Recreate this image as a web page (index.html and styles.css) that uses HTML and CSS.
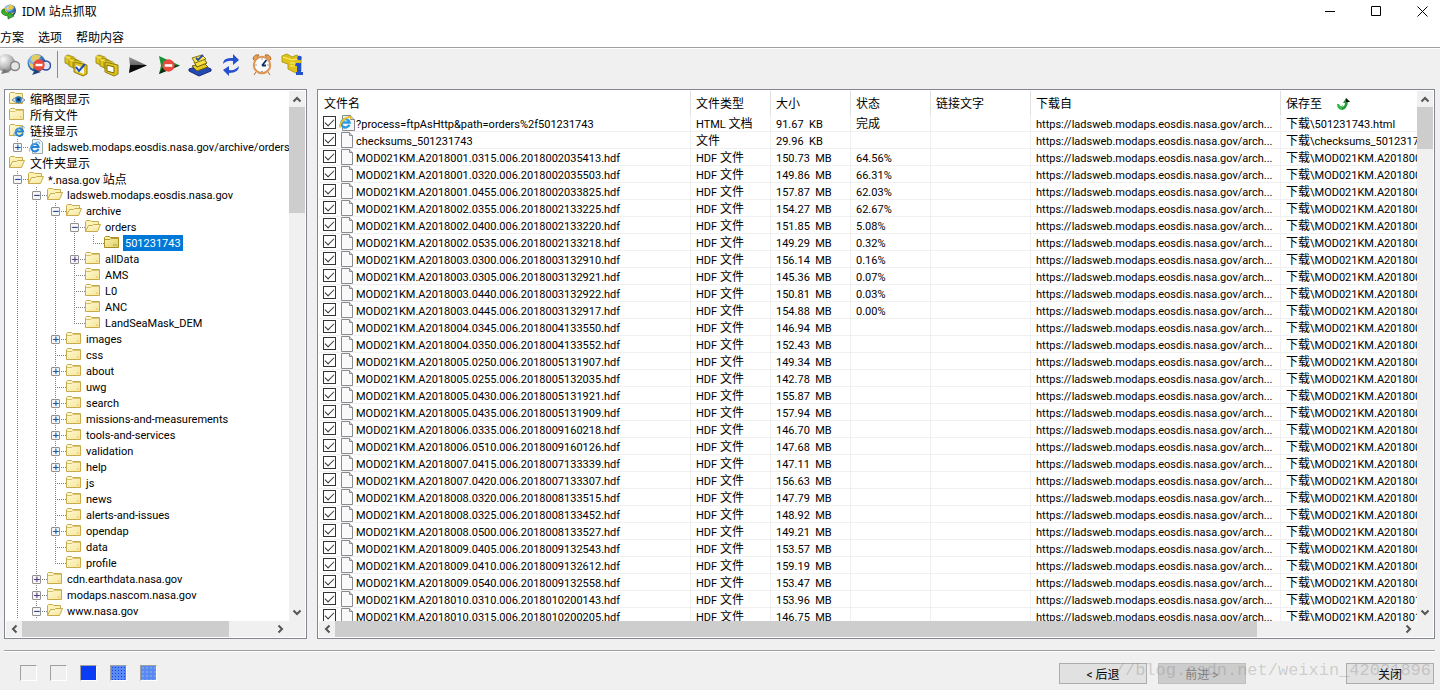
FILE: index.html
```html
<!DOCTYPE html>
<html lang="zh-CN">
<head>
<meta charset="utf-8">
<title>IDM 站点抓取</title>
<link rel="stylesheet" href="styles.css">
</head>
<body>
<svg class="defs" aria-hidden="true">
  <defs>
    <linearGradient id="gold" x1="0" y1="0" x2="1" y2="1"><stop offset="0" stop-color="#fffbd8"/><stop offset="1" stop-color="#f6e596"/></linearGradient>
    <linearGradient id="goldsel" x1="0" y1="0" x2="1" y2="1"><stop offset="0" stop-color="#fdf6b8"/><stop offset="1" stop-color="#e0cd62"/></linearGradient>
    <linearGradient id="dark" x1="0" y1="0" x2="0" y2="1"><stop offset="0" stop-color="#999"/><stop offset=".5" stop-color="#666"/><stop offset=".5" stop-color="#111"/><stop offset="1" stop-color="#000"/></linearGradient>
    <radialGradient id="earth" cx=".35" cy=".3" r=".75"><stop offset="0" stop-color="#d4ebff"/><stop offset=".5" stop-color="#4186cf"/><stop offset="1" stop-color="#123a80"/></radialGradient>
    <radialGradient id="moon" cx=".35" cy=".3" r=".75"><stop offset="0" stop-color="#fafafa"/><stop offset=".6" stop-color="#bbb"/><stop offset="1" stop-color="#777"/></radialGradient>
    <symbol id="folder" viewBox="0 0 16 16"><path d="M.5 12.500v-10l1-1h4l1 1h8v10z" fill="url(#gold)" stroke="#c9ab4c"/><path d="M1 4.500h5l1-1h7" fill="none" stroke="#d9c26e"/><path d="M11 9h2v2h-2z" fill="#fbcf8c"/></symbol>
    <symbol id="folder-sel" viewBox="0 0 16 16"><path d="M.5 12.500v-10l1-1h4l1 1h8v10z" fill="url(#goldsel)" stroke="#aa8e20"/><path d="M1 4.500h5l1-1h7" fill="none" stroke="#b79c34"/><path d="M9 9h4v2H9z" fill="#bfc36a"/></symbol>
    <symbol id="open" viewBox="0 0 16 16"><path d="M.5 12.500V2.500l1-1h4l1 1h7v4" fill="#fdf2b4" stroke="#c9ab4c"/><path d="M.5 12.500 3.500 6.500h4l1-1h7l-3 7z" fill="url(#gold)" stroke="#c9ab4c"/></symbol>
    <symbol id="e" viewBox="0 0 16 16"><path d="M13.300 10.500A5 5 0 1 1 13.500 8H5" fill="none" stroke="#2383d8" stroke-width="2.600"/><path d="M2 14C-1 13 4 4 12 1.500c3-1 3.500 1 2.500 2.500" fill="none" stroke="#58a9e8" stroke-width="1.300"/></symbol>
    <symbol id="e-gold" viewBox="0 0 16 16"><path d="M3.500.5h8l4 4v11h-12z" fill="#f7f7f7" stroke="#888"/><path d="M11.500.5v4h4" fill="#ddd" stroke="#888"/><path d="M10.300 9.800A4.200 4.200 0 1 1 10.500 7.500H4" fill="none" stroke="#299be6" stroke-width="2.400"/><path d="M1.500 12.500C-1 11 4 3 10 2c2-.3 2 .8 1.500 1.800" fill="none" stroke="#e9c62c" stroke-width="1.800"/></symbol>
    <symbol id="folder-e" viewBox="0 0 16 16"><path d="M.5 12.500v-10l1-1h4l1 1h7v10z" fill="url(#gold)" stroke="#c9ab4c"/><use href="#e" x="4" y="2" width="12" height="13"/></symbol>
    <symbol id="page-e" viewBox="0 0 16 16"><path d="M4.500.5h7l3 3v11h-10z" fill="#f2f5f8" stroke="#9aa"/><use href="#e" y="2" width="13" height="12"/></symbol>
    <symbol id="eye" viewBox="0 0 16 16"><path d="M.5 12.500v-10l1-1h4l1 1h7v10z" fill="url(#gold)" stroke="#c9ab4c"/><path d="M3 9q6-6 13 0-6 6-13 0z" fill="#dbe8f1" stroke="#718da5"/><circle cx="9.500" cy="8.500" r="3.200" fill="#1e6fb4"/><circle cx="9.500" cy="8.500" r="1.300" fill="#071d3c"/></symbol>
    <symbol id="doc" viewBox="0 0 16 16"><path d="M2.500.5h8l3 3v12h-11z" fill="#f9f9f9" stroke="#888b90"/><path d="M10.500.5v3h3" fill="#ddd" stroke="#888b90"/></symbol>
    <symbol id="chev" viewBox="0 0 16 16"><path d="M4.500 10.500 8 7l3.500 3.500" fill="none" stroke="#555" stroke-width="2"/></symbol>
    <symbol id="idm" viewBox="0 0 16 16"><circle cx="9" cy="6.500" r="6" fill="url(#earth)"/><path d="M8 1q4-1 5 3l-3 2-3-1z" fill="#e7c745"/><path d="M2.500 4Q-1 8 2 10q3 3 9 .5l3-2.500q-5 2-8 0Q4 6 6 4z" fill="#e9c62c"/><path d="M1 6q-2 5 6 6v3l6-3-5-4v1.500Q3 9 3.500 5z" fill="#35b52e" stroke="#176c17" stroke-width=".7"/></symbol>
    <symbol id="stop" viewBox="0 0 12 12"><circle cx="6" cy="6" r="5.700" fill="#e94a3c"/><path d="M2.500 4.800h7v2.400h-7z" fill="#fff"/></symbol>
    <symbol id="cam" viewBox="0 0 12 12"><path d="M1 2.500 4 1l7 2.500v7L8 12 1 9z" fill="#e0c61c" stroke="#8f7d14" stroke-width=".8"/><path d="M1 2.500 8 5l3-1.500M8 5v6.500" fill="none" stroke="#fff06a" stroke-width=".9"/></symbol>
    <symbol id="cams" viewBox="0 0 24 24"><use href="#cam" x="0" y="1" width="12" height="12"/><use href="#cam" x="4" y="4" width="12" height="12"/><use href="#cam" x="8" y="6" width="12" height="12"/><path d="m10 9 13 3v9l-4 2-9-4z" fill="#e0c61c" stroke="#8f7d14"/></symbol>
  </defs>
</svg>
<div class="app">
  <header class="titlebar">
    <svg class="i16"><use href="#idm"/></svg>
    <h1>IDM 站点抓取</h1>
    <div class="winctl">
      <button type="button" aria-label="最小化"><svg viewBox="0 0 11 11"><path d="M0 5.500h10"/></svg></button>
      <button type="button" aria-label="最大化"><svg viewBox="0 0 11 11"><path d="M.5.5h9v9h-9z"/></svg></button>
      <button type="button" aria-label="关闭窗口"><svg viewBox="0 0 11 11"><path d="m.5.5 10 10m0-10-10 10"/></svg></button>
    </div>
  </header>
  <nav class="menu"><button type="button">方案</button><button type="button">选项</button><button type="button">帮助内容</button></nav>
  <div class="toolbar" role="toolbar">
    <button type="button" class="first" aria-label="开始"><svg viewBox="4 0 20 24"><circle cx="10" cy="10" r="9" fill="url(#moon)"/><path d="m5 21 3-5 6 3z" fill="#777"/><circle cx="19" cy="13" r="4.500" fill="#e5e5e5" stroke="#858585" stroke-width="1.500"/></svg></button>
    <button type="button" aria-label="停止抓取"><svg viewBox="0 0 24 24"><circle cx="9.500" cy="10" r="9" fill="url(#earth)"/><path d="M5 3q4-3 9 0l-3 4-6 1zM2 9l5 3-1 4q-4-2-4-7z" fill="#e3cd62"/><path d="m5 22 3-5 6 2z" fill="#17407f"/><circle cx="19" cy="12.500" r="4.500" fill="#dfe4f2" stroke="#2b4ba0" stroke-width="1.500"/><use href="#stop" x="6" y="6" width="12" height="12"/></svg></button>
    <span class="sep"></span>
    <button type="button" aria-label="全部选中"><svg viewBox="0 0 24 24"><use href="#cams"/><path d="m12 12 8 3v6l-8-3z" fill="#eef3ff"/><path d="m12 14 3 4 6-7" fill="none" stroke="#274bb0" stroke-width="2"/></svg></button>
    <button type="button" aria-label="取消选中"><svg viewBox="0 0 24 24"><use href="#cams"/><path d="m12 12 7 2v6l-7-2z" fill="#fff" stroke="#77670c"/></svg></button>
    <button type="button" aria-label="下载"><svg viewBox="0 0 24 24"><path d="m3 4 18 8.500L3 20l1-7.500z" fill="url(#dark)"/></svg></button>
    <button type="button" aria-label="停止下载"><svg viewBox="0 0 24 24"><path d="m2 3 21 9.500L2 21l2-8.500z" fill="#159238"/><path d="m14 12.500h9L2 21l3-6z" fill="#102915"/><use href="#stop" x="5" y="6" width="13" height="13"/></svg></button>
    <button type="button" aria-label="添加到队列"><svg viewBox="0 0 24 24"><path d="m1 16 13-4 9 4v2l-12 5-10-5z" fill="#244ab4" stroke="#132c7c"/><path d="m4 13 12-3 4 4-11 4z" fill="#e6c920" stroke="#6d5c0c"/><path d="m6 9 10-3 3 4-10 4z" fill="#f5df43" stroke="#6d5c0c"/><path d="m4 5 10-3 4 4-11 4z" fill="#f8e955" stroke="#82710e"/><path d="m8 5 2 2 5-5" fill="none" stroke="#274bb0" stroke-width="1.800"/></svg></button>
    <button type="button" aria-label="刷新"><svg viewBox="0 0 24 24"><path d="M4 11q0-7 10-6V1l6 6-6 5V8q-6-1-10 3zM20 13q0 7-10 7v3l-6-6 6-4v4q6 1 10-4z" fill="#2550d0"/></svg></button>
    <button type="button" aria-label="计划任务"><svg viewBox="0 0 24 24"><path d="M3 6q1-5 6-4L5 8zM21 6q-1-5-6-4l4 6zM6 19l-2 3M18 19l2 3" fill="#e8a05a" stroke="#b46b2c"/><circle cx="12" cy="12" r="8.200" fill="#fbfdff" stroke="#dc9550" stroke-width="2"/><path d="M12 12.500 16.500 7M12 12.500h4" stroke="#153065" stroke-width="1.800"/><path d="M12 5.500v1M12 18v1M5.500 12h1M17.500 12h1" stroke="#444"/></svg></button>
    <button type="button" aria-label="属性"><svg viewBox="0 0 24 24"><path d="m1 3 5-2 5 3 5-2 4 4v12l-5 2-8-4v-5L1 9z" fill="#dfc31c" stroke="#b79e18"/><path d="M2 4l9 3 5-1M9 10h5M9 13h5" stroke="#fff06a" fill="none"/><circle cx="18.500" cy="5" r="2.300" fill="#2452cf"/><path d="M15 10h5v9h2v3h-7v-3h1v-6h-2z" fill="#2452cf"/></svg></button>
  </div>

  <main class="panes">
    <section class="pane tree-pane" aria-label="站点树">
      <div class="view">
        <ul class="tree">
          <li><svg class="i16"><use href="#eye"/></svg><span class="zh">缩略图显示</span></li>
          <li><svg class="i16"><use href="#folder"/></svg><span class="zh">所有文件</span></li>
          <li><svg class="i16"><use href="#folder-e"/></svg><span class="zh">链接显示</span></li>
          <li><i class="l"><button type="button" aria-label="展开">+</button></i><svg class="i16"><use href="#page-e"/></svg><span>ladsweb.modaps.eosdis.nasa.gov/archive/orders/</span></li>
          <li><svg class="i16"><use href="#open"/></svg><span class="zh">文件夹显示</span></li>
          <li><i class="t"><button type="button" aria-label="折叠">−</button></i><svg class="i16"><use href="#open"/></svg><span>*.nasa.gov <span class="zh">站点</span></span></li>
          <li><i class="v"></i><i class="t"><button type="button" aria-label="折叠">−</button></i><svg class="i16"><use href="#open"/></svg><span>ladsweb.modaps.eosdis.nasa.gov</span></li>
          <li><i class="v"></i><i class="v"></i><i class="t"><button type="button" aria-label="折叠">−</button></i><svg class="i16"><use href="#open"/></svg><span>archive</span></li>
          <li><i class="v"></i><i class="v"></i><i class="v"></i><i class="t"><button type="button" aria-label="折叠">−</button></i><svg class="i16"><use href="#open"/></svg><span>orders</span></li>
          <li><i class="v"></i><i class="v"></i><i class="v"></i><i class="v"></i><i class="l"></i><svg class="i16"><use href="#folder-sel"/></svg><span class="selected">501231743</span></li>
          <li><i class="v"></i><i class="v"></i><i class="v"></i><i class="t"><button type="button" aria-label="展开">+</button></i><svg class="i16"><use href="#folder"/></svg><span>allData</span></li>
          <li><i class="v"></i><i class="v"></i><i class="v"></i><i class="t"></i><svg class="i16"><use href="#folder"/></svg><span>AMS</span></li>
          <li><i class="v"></i><i class="v"></i><i class="v"></i><i class="t"></i><svg class="i16"><use href="#folder"/></svg><span>L0</span></li>
          <li><i class="v"></i><i class="v"></i><i class="v"></i><i class="t"></i><svg class="i16"><use href="#folder"/></svg><span>ANC</span></li>
          <li><i class="v"></i><i class="v"></i><i class="v"></i><i class="l"></i><svg class="i16"><use href="#folder"/></svg><span>LandSeaMask_DEM</span></li>
          <li><i class="v"></i><i class="v"></i><i class="t"><button type="button" aria-label="展开">+</button></i><svg class="i16"><use href="#folder"/></svg><span>images</span></li>
          <li><i class="v"></i><i class="v"></i><i class="t"></i><svg class="i16"><use href="#folder"/></svg><span>css</span></li>
          <li><i class="v"></i><i class="v"></i><i class="t"><button type="button" aria-label="展开">+</button></i><svg class="i16"><use href="#folder"/></svg><span>about</span></li>
          <li><i class="v"></i><i class="v"></i><i class="t"></i><svg class="i16"><use href="#folder"/></svg><span>uwg</span></li>
          <li><i class="v"></i><i class="v"></i><i class="t"><button type="button" aria-label="展开">+</button></i><svg class="i16"><use href="#folder"/></svg><span>search</span></li>
          <li><i class="v"></i><i class="v"></i><i class="t"><button type="button" aria-label="展开">+</button></i><svg class="i16"><use href="#folder"/></svg><span>missions-and-measurements</span></li>
          <li><i class="v"></i><i class="v"></i><i class="t"><button type="button" aria-label="展开">+</button></i><svg class="i16"><use href="#folder"/></svg><span>tools-and-services</span></li>
          <li><i class="v"></i><i class="v"></i><i class="t"><button type="button" aria-label="展开">+</button></i><svg class="i16"><use href="#folder"/></svg><span>validation</span></li>
          <li><i class="v"></i><i class="v"></i><i class="t"><button type="button" aria-label="展开">+</button></i><svg class="i16"><use href="#folder"/></svg><span>help</span></li>
          <li><i class="v"></i><i class="v"></i><i class="t"></i><svg class="i16"><use href="#folder"/></svg><span>js</span></li>
          <li><i class="v"></i><i class="v"></i><i class="t"></i><svg class="i16"><use href="#folder"/></svg><span>news</span></li>
          <li><i class="v"></i><i class="v"></i><i class="t"></i><svg class="i16"><use href="#folder"/></svg><span>alerts-and-issues</span></li>
          <li><i class="v"></i><i class="v"></i><i class="t"><button type="button" aria-label="展开">+</button></i><svg class="i16"><use href="#folder"/></svg><span>opendap</span></li>
          <li><i class="v"></i><i class="v"></i><i class="t"></i><svg class="i16"><use href="#folder"/></svg><span>data</span></li>
          <li><i class="v"></i><i class="v"></i><i class="l"></i><svg class="i16"><use href="#folder"/></svg><span>profile</span></li>
          <li><i class="v"></i><i class="t"><button type="button" aria-label="展开">+</button></i><svg class="i16"><use href="#folder"/></svg><span>cdn.earthdata.nasa.gov</span></li>
          <li><i class="v"></i><i class="t"><button type="button" aria-label="展开">+</button></i><svg class="i16"><use href="#folder"/></svg><span>modaps.nascom.nasa.gov</span></li>
          <li><i class="v"></i><i class="t"><button type="button" aria-label="折叠">−</button></i><svg class="i16"><use href="#open"/></svg><span>www.nasa.gov</span></li>
        </ul>
      </div>
      <div class="vbar"><svg class="i16"><use href="#chev"/></svg><div class="thumb"></div><svg class="i16 down"><use href="#chev"/></svg></div>
      <div class="hbar"><svg class="i16 left"><use href="#chev"/></svg><div class="thumb"></div><svg class="i16 right"><use href="#chev"/></svg></div>
    </section>

    <section class="pane list-pane" aria-label="文件列表">
      <div class="view">
        <table>
          <colgroup><col class="c-name"><col class="c-s"><col class="c-s"><col class="c-s"><col class="c-text"><col class="c-from"><col></colgroup>
          <thead><tr><th>文件名</th><th>文件类型</th><th>大小</th><th>状态</th><th>链接文字</th><th>下载自</th><th><div class="sorted">保存至<svg viewBox="0 0 14 14"><path d="M1 7h2q1 3 4 2l-1-2 1 6q-6 0-6-6z" fill="#35b84b"/><path d="M6 13q5-1 6-8h2l-4-4-3 5h2q0 3-3 4z" fill="#1f9c38"/><path d="m10 1 4 4h-4z" fill="#111"/></svg></div></th></tr></thead>
          <tbody>
          <tr><td><label><input type="checkbox" checked><svg class="ico"><use href="#e-gold"/></svg>?process=ftpAsHttp&amp;path=orders%2f501231743</label></td><td>HTML <span class="zh">文档</span></td><td>91.67&nbsp; KB</td><td><span class="zh">完成</span></td><td></td><td>https://ladsweb.modaps.eosdis.nasa.gov/arch...</td><td><span class="zh">下载</span>\501231743.html</td></tr>
          <tr><td><label><input type="checkbox" checked><svg class="ico"><use href="#doc"/></svg>checksums_501231743</label></td><td><span class="zh">文件</span></td><td>29.96&nbsp; KB</td><td></td><td></td><td>https://ladsweb.modaps.eosdis.nasa.gov/arch...</td><td><span class="zh">下载</span>\checksums_501231743</td></tr>
          <tr><td><label><input type="checkbox" checked><svg class="ico"><use href="#doc"/></svg>MOD021KM.A2018001.0315.006.2018002035413.hdf</label></td><td>HDF <span class="zh">文件</span></td><td>150.73&nbsp; MB</td><td>64.56%</td><td></td><td>https://ladsweb.modaps.eosdis.nasa.gov/arch...</td><td><span class="zh">下载</span>\MOD021KM.A2018001</td></tr>
          <tr><td><label><input type="checkbox" checked><svg class="ico"><use href="#doc"/></svg>MOD021KM.A2018001.0320.006.2018002035503.hdf</label></td><td>HDF <span class="zh">文件</span></td><td>149.86&nbsp; MB</td><td>66.31%</td><td></td><td>https://ladsweb.modaps.eosdis.nasa.gov/arch...</td><td><span class="zh">下载</span>\MOD021KM.A2018001</td></tr>
          <tr><td><label><input type="checkbox" checked><svg class="ico"><use href="#doc"/></svg>MOD021KM.A2018001.0455.006.2018002033825.hdf</label></td><td>HDF <span class="zh">文件</span></td><td>157.87&nbsp; MB</td><td>62.03%</td><td></td><td>https://ladsweb.modaps.eosdis.nasa.gov/arch...</td><td><span class="zh">下载</span>\MOD021KM.A2018001</td></tr>
          <tr><td><label><input type="checkbox" checked><svg class="ico"><use href="#doc"/></svg>MOD021KM.A2018002.0355.006.2018002133225.hdf</label></td><td>HDF <span class="zh">文件</span></td><td>154.27&nbsp; MB</td><td>62.67%</td><td></td><td>https://ladsweb.modaps.eosdis.nasa.gov/arch...</td><td><span class="zh">下载</span>\MOD021KM.A2018002</td></tr>
          <tr><td><label><input type="checkbox" checked><svg class="ico"><use href="#doc"/></svg>MOD021KM.A2018002.0400.006.2018002133220.hdf</label></td><td>HDF <span class="zh">文件</span></td><td>151.85&nbsp; MB</td><td>5.08%</td><td></td><td>https://ladsweb.modaps.eosdis.nasa.gov/arch...</td><td><span class="zh">下载</span>\MOD021KM.A2018002</td></tr>
          <tr><td><label><input type="checkbox" checked><svg class="ico"><use href="#doc"/></svg>MOD021KM.A2018002.0535.006.2018002133218.hdf</label></td><td>HDF <span class="zh">文件</span></td><td>149.29&nbsp; MB</td><td>0.32%</td><td></td><td>https://ladsweb.modaps.eosdis.nasa.gov/arch...</td><td><span class="zh">下载</span>\MOD021KM.A2018002</td></tr>
          <tr><td><label><input type="checkbox" checked><svg class="ico"><use href="#doc"/></svg>MOD021KM.A2018003.0300.006.2018003132910.hdf</label></td><td>HDF <span class="zh">文件</span></td><td>156.14&nbsp; MB</td><td>0.16%</td><td></td><td>https://ladsweb.modaps.eosdis.nasa.gov/arch...</td><td><span class="zh">下载</span>\MOD021KM.A2018003</td></tr>
          <tr><td><label><input type="checkbox" checked><svg class="ico"><use href="#doc"/></svg>MOD021KM.A2018003.0305.006.2018003132921.hdf</label></td><td>HDF <span class="zh">文件</span></td><td>145.36&nbsp; MB</td><td>0.07%</td><td></td><td>https://ladsweb.modaps.eosdis.nasa.gov/arch...</td><td><span class="zh">下载</span>\MOD021KM.A2018003</td></tr>
          <tr><td><label><input type="checkbox" checked><svg class="ico"><use href="#doc"/></svg>MOD021KM.A2018003.0440.006.2018003132922.hdf</label></td><td>HDF <span class="zh">文件</span></td><td>150.81&nbsp; MB</td><td>0.03%</td><td></td><td>https://ladsweb.modaps.eosdis.nasa.gov/arch...</td><td><span class="zh">下载</span>\MOD021KM.A2018003</td></tr>
          <tr><td><label><input type="checkbox" checked><svg class="ico"><use href="#doc"/></svg>MOD021KM.A2018003.0445.006.2018003132917.hdf</label></td><td>HDF <span class="zh">文件</span></td><td>154.88&nbsp; MB</td><td>0.00%</td><td></td><td>https://ladsweb.modaps.eosdis.nasa.gov/arch...</td><td><span class="zh">下载</span>\MOD021KM.A2018003</td></tr>
          <tr><td><label><input type="checkbox" checked><svg class="ico"><use href="#doc"/></svg>MOD021KM.A2018004.0345.006.2018004133550.hdf</label></td><td>HDF <span class="zh">文件</span></td><td>146.94&nbsp; MB</td><td></td><td></td><td>https://ladsweb.modaps.eosdis.nasa.gov/arch...</td><td><span class="zh">下载</span>\MOD021KM.A2018004</td></tr>
          <tr><td><label><input type="checkbox" checked><svg class="ico"><use href="#doc"/></svg>MOD021KM.A2018004.0350.006.2018004133552.hdf</label></td><td>HDF <span class="zh">文件</span></td><td>152.43&nbsp; MB</td><td></td><td></td><td>https://ladsweb.modaps.eosdis.nasa.gov/arch...</td><td><span class="zh">下载</span>\MOD021KM.A2018004</td></tr>
          <tr><td><label><input type="checkbox" checked><svg class="ico"><use href="#doc"/></svg>MOD021KM.A2018005.0250.006.2018005131907.hdf</label></td><td>HDF <span class="zh">文件</span></td><td>149.34&nbsp; MB</td><td></td><td></td><td>https://ladsweb.modaps.eosdis.nasa.gov/arch...</td><td><span class="zh">下载</span>\MOD021KM.A2018005</td></tr>
          <tr><td><label><input type="checkbox" checked><svg class="ico"><use href="#doc"/></svg>MOD021KM.A2018005.0255.006.2018005132035.hdf</label></td><td>HDF <span class="zh">文件</span></td><td>142.78&nbsp; MB</td><td></td><td></td><td>https://ladsweb.modaps.eosdis.nasa.gov/arch...</td><td><span class="zh">下载</span>\MOD021KM.A2018005</td></tr>
          <tr><td><label><input type="checkbox" checked><svg class="ico"><use href="#doc"/></svg>MOD021KM.A2018005.0430.006.2018005131921.hdf</label></td><td>HDF <span class="zh">文件</span></td><td>155.87&nbsp; MB</td><td></td><td></td><td>https://ladsweb.modaps.eosdis.nasa.gov/arch...</td><td><span class="zh">下载</span>\MOD021KM.A2018005</td></tr>
          <tr><td><label><input type="checkbox" checked><svg class="ico"><use href="#doc"/></svg>MOD021KM.A2018005.0435.006.2018005131909.hdf</label></td><td>HDF <span class="zh">文件</span></td><td>157.94&nbsp; MB</td><td></td><td></td><td>https://ladsweb.modaps.eosdis.nasa.gov/arch...</td><td><span class="zh">下载</span>\MOD021KM.A2018005</td></tr>
          <tr><td><label><input type="checkbox" checked><svg class="ico"><use href="#doc"/></svg>MOD021KM.A2018006.0335.006.2018009160218.hdf</label></td><td>HDF <span class="zh">文件</span></td><td>146.70&nbsp; MB</td><td></td><td></td><td>https://ladsweb.modaps.eosdis.nasa.gov/arch...</td><td><span class="zh">下载</span>\MOD021KM.A2018006</td></tr>
          <tr><td><label><input type="checkbox" checked><svg class="ico"><use href="#doc"/></svg>MOD021KM.A2018006.0510.006.2018009160126.hdf</label></td><td>HDF <span class="zh">文件</span></td><td>147.68&nbsp; MB</td><td></td><td></td><td>https://ladsweb.modaps.eosdis.nasa.gov/arch...</td><td><span class="zh">下载</span>\MOD021KM.A2018006</td></tr>
          <tr><td><label><input type="checkbox" checked><svg class="ico"><use href="#doc"/></svg>MOD021KM.A2018007.0415.006.2018007133339.hdf</label></td><td>HDF <span class="zh">文件</span></td><td>147.11&nbsp; MB</td><td></td><td></td><td>https://ladsweb.modaps.eosdis.nasa.gov/arch...</td><td><span class="zh">下载</span>\MOD021KM.A2018007</td></tr>
          <tr><td><label><input type="checkbox" checked><svg class="ico"><use href="#doc"/></svg>MOD021KM.A2018007.0420.006.2018007133307.hdf</label></td><td>HDF <span class="zh">文件</span></td><td>156.63&nbsp; MB</td><td></td><td></td><td>https://ladsweb.modaps.eosdis.nasa.gov/arch...</td><td><span class="zh">下载</span>\MOD021KM.A2018007</td></tr>
          <tr><td><label><input type="checkbox" checked><svg class="ico"><use href="#doc"/></svg>MOD021KM.A2018008.0320.006.2018008133515.hdf</label></td><td>HDF <span class="zh">文件</span></td><td>147.79&nbsp; MB</td><td></td><td></td><td>https://ladsweb.modaps.eosdis.nasa.gov/arch...</td><td><span class="zh">下载</span>\MOD021KM.A2018008</td></tr>
          <tr><td><label><input type="checkbox" checked><svg class="ico"><use href="#doc"/></svg>MOD021KM.A2018008.0325.006.2018008133452.hdf</label></td><td>HDF <span class="zh">文件</span></td><td>148.92&nbsp; MB</td><td></td><td></td><td>https://ladsweb.modaps.eosdis.nasa.gov/arch...</td><td><span class="zh">下载</span>\MOD021KM.A2018008</td></tr>
          <tr><td><label><input type="checkbox" checked><svg class="ico"><use href="#doc"/></svg>MOD021KM.A2018008.0500.006.2018008133527.hdf</label></td><td>HDF <span class="zh">文件</span></td><td>149.21&nbsp; MB</td><td></td><td></td><td>https://ladsweb.modaps.eosdis.nasa.gov/arch...</td><td><span class="zh">下载</span>\MOD021KM.A2018008</td></tr>
          <tr><td><label><input type="checkbox" checked><svg class="ico"><use href="#doc"/></svg>MOD021KM.A2018009.0405.006.2018009132543.hdf</label></td><td>HDF <span class="zh">文件</span></td><td>153.57&nbsp; MB</td><td></td><td></td><td>https://ladsweb.modaps.eosdis.nasa.gov/arch...</td><td><span class="zh">下载</span>\MOD021KM.A2018009</td></tr>
          <tr><td><label><input type="checkbox" checked><svg class="ico"><use href="#doc"/></svg>MOD021KM.A2018009.0410.006.2018009132612.hdf</label></td><td>HDF <span class="zh">文件</span></td><td>159.19&nbsp; MB</td><td></td><td></td><td>https://ladsweb.modaps.eosdis.nasa.gov/arch...</td><td><span class="zh">下载</span>\MOD021KM.A2018009</td></tr>
          <tr><td><label><input type="checkbox" checked><svg class="ico"><use href="#doc"/></svg>MOD021KM.A2018009.0540.006.2018009132558.hdf</label></td><td>HDF <span class="zh">文件</span></td><td>153.47&nbsp; MB</td><td></td><td></td><td>https://ladsweb.modaps.eosdis.nasa.gov/arch...</td><td><span class="zh">下载</span>\MOD021KM.A2018009</td></tr>
          <tr><td><label><input type="checkbox" checked><svg class="ico"><use href="#doc"/></svg>MOD021KM.A2018010.0310.006.2018010200143.hdf</label></td><td>HDF <span class="zh">文件</span></td><td>153.96&nbsp; MB</td><td></td><td></td><td>https://ladsweb.modaps.eosdis.nasa.gov/arch...</td><td><span class="zh">下载</span>\MOD021KM.A2018010</td></tr>
          <tr><td><label><input type="checkbox" checked><svg class="ico"><use href="#doc"/></svg>MOD021KM.A2018010.0315.006.2018010200205.hdf</label></td><td>HDF <span class="zh">文件</span></td><td>146.75&nbsp; MB</td><td></td><td></td><td>https://ladsweb.modaps.eosdis.nasa.gov/arch...</td><td><span class="zh">下载</span>\MOD021KM.A2018010</td></tr>
          </tbody>
        </table>
      </div>
      <div class="vbar"><svg class="i16"><use href="#chev"/></svg><div class="thumb"></div><svg class="i16 down"><use href="#chev"/></svg></div>
      <div class="hbar"><svg class="i16 left"><use href="#chev"/></svg><div class="thumb"></div><svg class="i16 right"><use href="#chev"/></svg></div>
    </section>
  </main>

  <footer class="footer">
    <div class="swatches"><span></span><span></span><span class="blue"></span><span class="mix"></span><span class="pale"></span></div>
    <div class="actions">
      <button type="button">&lt; 后退</button>
      <button type="button" disabled>前进 &gt;</button>
      <button type="button" class="close">关闭</button>
    </div>
    <div class="watermark">//blog.csdn.net/weixin_42021896</div>
  </footer>
</div>
</body>
</html>
```
FILE: styles.css
```css
* { box-sizing: border-box; }
body {
  margin: 0;
  background: #f0f0f0;
  color: #000;
  font: 11px/16px Roboto, "Noto Sans CJK SC", sans-serif;
}
button { font: inherit; color: inherit; padding: 0; border: 0; background: none; }
svg { display: block; flex: none; }
.defs { position: absolute; width: 0; height: 0; }
.zh { font-size: 12px; }
.i16 { width: 16px; height: 16px; }
.app { display: flex; flex-direction: column; height: 100vh; overflow: hidden; }

.titlebar { display: flex; align-items: center; gap: 5px; height: 23px; padding: 0 12px 0 1px; background: #fff; }
.titlebar h1 { margin: 0; flex: 1; font: 12px/16px "Noto Sans", "Noto Sans CJK SC", sans-serif; }
.winctl { display: flex; gap: 35px; }
.winctl svg { width: 11px; height: 11px; fill: none; stroke: #000; }
.menu { display: flex; gap: 14px; height: 25px; padding-top: 5px; background: #fff; border-bottom: 1px solid #a0a0a0; font-size: 12px; }
.toolbar { display: flex; align-items: center; gap: 7px; height: 41px; padding-bottom: 9px; border-top: 1px solid #fff; }
.toolbar button, .toolbar svg { width: 24px; height: 24px; }
.toolbar .first, .toolbar .first svg { width: 20px; }
.sep { width: 1px; height: 27px; margin: 0 -1px; background: #888c93; }

.panes { flex: 1; min-height: 0; display: flex; gap: 10px; padding: 0 5px 0 4px; }
.pane {
  display: grid;
  grid-template: minmax(0, 1fr) 16px / minmax(0, 1fr) 16px;
  padding: 1px;
  border: 1px solid #828790;
  background: #fff;
}
.tree-pane { width: 303px; flex: none; }
.list-pane { flex: 1; min-width: 0; }
.view { overflow: hidden; }
.vbar, .hbar { display: flex; background: #f0f0f0; }
.vbar { flex-direction: column; }
.hbar { grid-column: 1 / 3; padding-right: 16px; }
.thumb { background: #cdcdcd; }
.vbar .thumb { margin-bottom: auto; }
.hbar .thumb { margin-right: auto; }
.tree-pane .vbar .thumb { height: 20%; }
.tree-pane .hbar .thumb { width: 73%; }
.list-pane .vbar .thumb { height: 8%; }
.list-pane .hbar .thumb { width: 84%; }
.down { transform: rotate(180deg); }
.left { transform: rotate(-90deg); }
.right { transform: rotate(90deg); }

.tree { list-style: none; margin: 0; padding: 0 0 0 3px; white-space: nowrap; }
.tree li { display: flex; height: 16px; line-height: 18px; }
.tree li > span { padding: 0 1px; margin-left: 3px; }
.tree li > .zh { margin-left: 4px; }
.tree li > .selected { background: #0078d7; color: #fff; padding: 0 2px; }
.tree i { flex: none; width: 19px; height: 16px; padding: 4px; background-repeat: no-repeat; }
.v, .t, .l {
  --dotv: repeating-linear-gradient(#808080 0 1px, transparent 1px 2px);
  --doth: repeating-linear-gradient(90deg, #808080 0 1px, transparent 1px 2px);
}
.v { background: var(--dotv) 8px 0 / 1px 16px; }
.t { background: var(--dotv) 8px 0 / 1px 16px, var(--doth) 8px 8px / 11px 1px; }
.l { background: var(--dotv) 8px 0 / 1px 8px, var(--doth) 8px 8px / 11px 1px; }
.tree button {
  display: block;
  width: 9px;
  height: 9px;
  border: 1px solid #919191;
  border-radius: 1px;
  background: #f6f6f6;
  color: #2b4a9b;
  font: bold 9px/7px "DejaVu Sans", sans-serif;
  overflow: hidden;
}

table { width: 100%; table-layout: fixed; border-collapse: separate; border-spacing: 0; }
.c-name { width: 372px; }
.c-s { width: 80px; }
.c-text { width: 100px; }
.c-from { width: 250px; }
th, td { padding: 0 0 0 5px; overflow: hidden; white-space: nowrap; text-align: left; }
th { height: 24px; padding-top: 2px; border-right: 1px solid #e0e0e0; font-size: 12px; font-weight: 400; }
td { height: 17px; padding-top: 3px; line-height: 13px; border-right: 1px solid #f0f0f0; border-bottom: 1px solid #f0f0f0; }
td:first-child { padding: 0 0 0 4px; }
th:last-child, td:last-child { border-right: 0; }
td .zh { line-height: 12px; }
label { display: flex; align-items: flex-start; height: 16px; line-height: 19px; }
.ico { width: 16px; height: 16px; margin: 0 1px 0 3px; }
input {
  appearance: none;
  flex: none;
  width: 13px;
  height: 13px;
  margin: 1px 0 0;
  border: 1px solid #333;
  background: #fff;
}
input:checked::before {
  content: "";
  display: block;
  width: 8px;
  height: 4px;
  margin: 2px 1px;
  border: solid #333;
  border-width: 0 0 1px 1px;
  transform: rotate(-45deg);
}
.sorted { display: flex; align-items: center; gap: 14px; }
.sorted svg { width: 14px; height: 14px; }

.footer {
  position: relative;
  display: flex;
  justify-content: space-between;
  align-items: flex-start;
  margin: 11px 5px 0 4px;
  height: 40px;
  padding-top: 12px;
  border-top: 1px solid #a0a0a0;
  box-shadow: inset 0 1px #fff;
}
.swatches { display: flex; gap: 13px; padding: 2px 0 0 16px; }
.swatches span { width: 17px; height: 16px; border: 1px solid; border-color: #a0a0a0 #fff #fff #a0a0a0; }
.swatches .blue { background: #0a3cf5; }
.swatches .mix { background: radial-gradient(#1242e8 1px, transparent 1px) 0 0 / 3px 3px #5b8af5; }
.swatches .pale { background: radial-gradient(#77a4e0 1px, transparent 1px) 0 0 / 4px 4px #5b88f7; }
.actions { display: flex; gap: 11px; padding-right: 1px; font-size: 12px; }
.actions button { width: 88px; height: 21px; padding-top: 2px; border: 1px solid #adadad; background: #e1e1e1; }
.actions button:disabled { border-color: #bfbfbf; background: #ccc; color: #838383; }
.actions .close { margin-left: 89px; }
.watermark {
  position: absolute;
  right: 4px;
  top: 9px;
  font: 17px/22px "Liberation Mono", monospace;
  color: rgba(120, 120, 120, .3);
  pointer-events: none;
}
```
